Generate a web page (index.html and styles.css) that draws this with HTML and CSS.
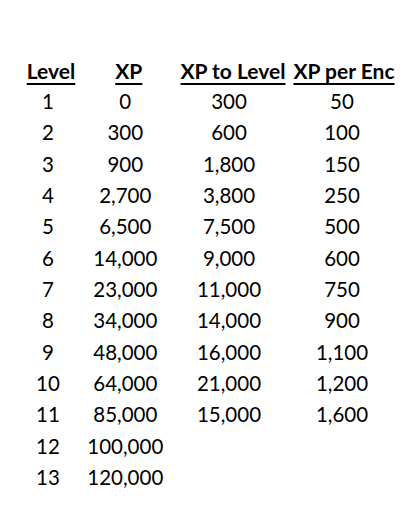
FILE: index.html
```html
<!DOCTYPE html>
<html>
<head>
<meta charset="utf-8">
<link rel="stylesheet" href="styles.css">
</head>
<body>
<div class="table">
  <div class="row head">
    <div class="cell c1"><span>Level</span></div>
    <div class="cell c2"><span>XP</span></div>
    <div class="cell c3"><span>XP to Level</span></div>
    <div class="cell c4"><span>XP per Enc</span></div>
  </div>
  <div class="row"><div class="cell">1</div><div class="cell">0</div><div class="cell">300</div><div class="cell">50</div></div>
  <div class="row"><div class="cell">2</div><div class="cell">300</div><div class="cell">600</div><div class="cell">100</div></div>
  <div class="row"><div class="cell">3</div><div class="cell">900</div><div class="cell">1,800</div><div class="cell">150</div></div>
  <div class="row"><div class="cell">4</div><div class="cell">2,700</div><div class="cell">3,800</div><div class="cell">250</div></div>
  <div class="row"><div class="cell">5</div><div class="cell">6,500</div><div class="cell">7,500</div><div class="cell">500</div></div>
  <div class="row"><div class="cell">6</div><div class="cell">14,000</div><div class="cell">9,000</div><div class="cell">600</div></div>
  <div class="row"><div class="cell">7</div><div class="cell">23,000</div><div class="cell">11,000</div><div class="cell">750</div></div>
  <div class="row"><div class="cell">8</div><div class="cell">34,000</div><div class="cell">14,000</div><div class="cell">900</div></div>
  <div class="row"><div class="cell">9</div><div class="cell">48,000</div><div class="cell">16,000</div><div class="cell">1,100</div></div>
  <div class="row"><div class="cell">10</div><div class="cell">64,000</div><div class="cell">21,000</div><div class="cell">1,200</div></div>
  <div class="row"><div class="cell">11</div><div class="cell">85,000</div><div class="cell">15,000</div><div class="cell">1,600</div></div>
  <div class="row"><div class="cell">12</div><div class="cell">100,000</div><div class="cell"></div><div class="cell"></div></div>
  <div class="row"><div class="cell">13</div><div class="cell">120,000</div><div class="cell"></div><div class="cell"></div></div>
</div>
</body>
</html>
```
FILE: styles.css
```css
html, body {
  margin: 0;
  padding: 0;
  background: #ffffff;
}
body {
  font-family: Lato, "Open Sans", sans-serif;
  font-size: 20.5px;
  color: #000000;
}
.table {
  padding-top: 56.1px;
  display: flex;
  flex-direction: column;
}
.row {
  display: grid;
  grid-template-columns: 96px 58.6px 148.8px 77.2px;
  height: 31.37px;
  line-height: 31.4px;
}
.row.head {
  height: 29.7px;
  line-height: 30px;
  font-size: 21px;
  font-weight: bold;
}
.cell {
  display: flex;
  justify-content: center;
  white-space: nowrap;
  min-width: 0;
}
.head span {
  text-decoration: underline;
  text-decoration-thickness: 2px;
  text-underline-offset: 3.5px;
}
.head .c1 { padding-left: 6px; }
.head .c2 { padding-left: 7px; }
.head .c3 { padding-left: 8px; }
.head .c4 { padding-left: 4px; }
```
